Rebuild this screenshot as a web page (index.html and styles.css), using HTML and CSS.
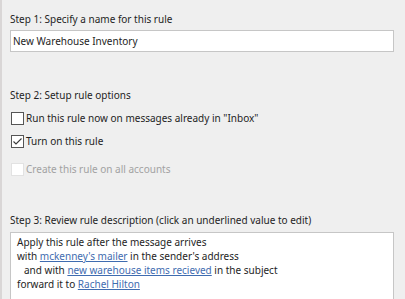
FILE: index.html
```html
<!DOCTYPE HTML>
<html lang="en-US">
<head>
	<meta charset="UTF-8" />
	<title>Rules Wizard</title>
	<link rel="stylesheet" href="styles.css">
</head>
<body>
	<div id="wrapper">
		<div class="step stepName">
			<label for="ruleName">Step 1: Specify a name for this rule</label>
			<input type="text" id="ruleName" value="New Warehouse Inventory" />
		</div>

		<div class="step stepOptions">
			<p class="stepTitle">Step 2: Setup rule options</p>
			<div class="option first">
				<span class="box"></span>
				<span>Run this rule now on messages already in "Inbox"</span>
			</div>
			<div class="option">
				<span class="box checked">
					<svg width="11" height="11" viewBox="0 0 11 11"><path d="M1.5 5.5 L4 8 L9.5 2.5" fill="none" stroke="#3a3a3a" stroke-width="1.1"/></svg>
				</span>
				<span>Turn on this rule</span>
			</div>
			<div class="option disabled">
				<span class="box"></span>
				<span>Create this rule on all accounts</span>
			</div>
		</div>

		<div class="step stepReview">
			<p class="stepTitle">Step 3: Review rule description (click an underlined value to edit)</p>
			<div class="description">
				<div>Apply this rule after the message arrives</div>
				<div>with <a href="#">mckenney's mailer</a> in the sender's address</div>
				<div class="indent">and with <a href="#">new warehouse items recieved</a> in the subject</div>
				<div>forward it to <a href="#">Rachel Hilton</a></div>
			</div>
		</div>
	</div>
</body>
</html>
```
FILE: styles.css
```css
html, body {
	margin: 0;
	height: 100%;
	overflow: hidden;
}
body {
	background: #efefef;
	font-family: "Noto Sans", sans-serif;
	font-size: 10px;
	color: #1e1e1e;
	border-left: 2px solid #d9d6d6;
}
#wrapper {
	padding: 12px 11px 0 8px;
}
p {
	margin: 0;
}
.stepName label {
	display: block;
	line-height: 14px;
}
.stepName input {
	display: block;
	box-sizing: border-box;
	width: 100%;
	height: 22px;
	margin-top: 4px;
	padding: 0 2px;
	border: 1px solid #c6c6c6;
	background: #fff;
	font: inherit;
	color: #1e1e1e;
}
.stepTitle {
	line-height: 14px;
}
.stepOptions {
	margin-top: 36px;
}
.option {
	display: flex;
	align-items: center;
	gap: 2px;
	height: 14px;
	padding-left: 1px;
	margin-top: 9px;
}
.option.first {
	margin-top: 9px;
}
.option.disabled {
	margin-top: 14px;
}
.box {
	box-sizing: border-box;
	width: 13px;
	height: 13px;
	border: 1px solid #555;
	background: #fff;
	display: flex;
	align-items: center;
	justify-content: center;
}
.disabled {
	color: #a2a2a2;
}
.disabled .box {
	border-color: #e2e2e2;
}
.stepReview {
	margin-top: 37px;
}
.description {
	box-sizing: border-box;
	margin-top: 5px;
	height: 80px;
	padding: 2px 6px;
	background: #fff;
	border: 1px solid #c6c6c6;
	border-bottom: none;
	line-height: 14px;
}
.description .indent {
	padding-left: 7px;
}
.description a {
	color: #3f6cb0;
	text-decoration: underline;
}
```
